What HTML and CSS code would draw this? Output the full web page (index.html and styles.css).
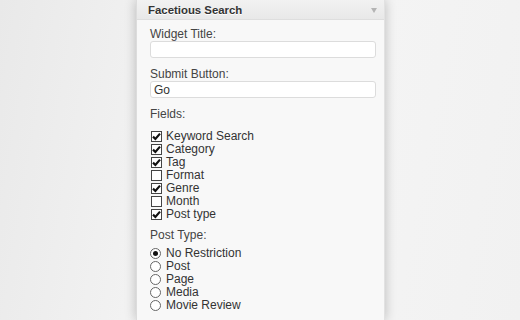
FILE: index.html
```html
<!DOCTYPE html>
<html lang="en">
<head>
    <meta charset="UTF-8">
    <title>Facetious Search widget</title>
    <link rel="stylesheet" href="styles.css">
</head>
<body>
    <div class="stage">
        <div class="widget">
            <div class="widget-top">
                <h3>Facetious Search</h3>
                <span class="arrow"></span>
            </div>

            <div class="widget-inside">
                <p class="field">
                    <label>Widget Title:</label>
                    <input type="text" class="text-input" value="">
                </p>
                <p class="field">
                    <label>Submit Button:</label>
                    <input type="text" class="text-input" value="Go">
                </p>

                <!-- fields -->
                <p class="group-title">Fields:</p>
                <ul class="choices">
                    <li><span class="box checked"><svg viewBox="0 0 9 9"><path d="M1 4.6 L3.4 7 L8 1.6" /></svg></span>Keyword Search</li>
                    <li><span class="box checked"><svg viewBox="0 0 9 9"><path d="M1 4.6 L3.4 7 L8 1.6" /></svg></span>Category</li>
                    <li><span class="box checked"><svg viewBox="0 0 9 9"><path d="M1 4.6 L3.4 7 L8 1.6" /></svg></span>Tag</li>
                    <li><span class="box"></span>Format</li>
                    <li><span class="box checked"><svg viewBox="0 0 9 9"><path d="M1 4.6 L3.4 7 L8 1.6" /></svg></span>Genre</li>
                    <li><span class="box"></span>Month</li>
                    <li><span class="box checked"><svg viewBox="0 0 9 9"><path d="M1 4.6 L3.4 7 L8 1.6" /></svg></span>Post type</li>
                </ul>

                <!-- post type -->
                <p class="group-title">Post Type:</p>
                <ul class="choices radios">
                    <li><span class="dot on"></span>No Restriction</li>
                    <li><span class="dot"></span>Post</li>
                    <li><span class="dot"></span>Page</li>
                    <li><span class="dot"></span>Media</li>
                    <li><span class="dot"></span>Movie Review</li>
                </ul>
            </div>
        </div>
    </div>
</body>
</html>
```

FILE: styles.css
```css
html, body {
    margin: 0;
    padding: 0;
    height: 100%;
}
body {
    font-family: 'Liberation Sans', Arial, sans-serif;
    font-size: 12px;
    color: #333;
    background: linear-gradient(100deg, #e9e9e9 0%, #f6f6f6 45%, #f1f1f1 100%);
    overflow: hidden;
}
.stage {
    padding-left: 136px;
    height: 100%;
}
.widget {
    width: 247px;
    min-height: 100%;
    background: #f8f8f8;
    border-left: 1px solid #dcdcdc;
    border-right: 1px solid #e2e2e2;
    box-shadow: 0 0 11px rgba(0, 0, 0, 0.24);
}
.widget-top {
    height: 19px;
    display: flex;
    align-items: center;
    justify-content: space-between;
    padding: 0 7px 0 11px;
    background: linear-gradient(#f2f2f2, #e8e8e8);
    border-bottom: 1px solid #dedede;
}
.widget-top h3 {
    margin: 0;
    font-size: 11.4px;
    font-weight: bold;
    color: #333;
    text-shadow: 0 1px 0 #fff;
}
.arrow {
    width: 0;
    height: 0;
    border-left: 3.5px solid transparent;
    border-right: 3.5px solid transparent;
    border-top: 5px solid #b4b4b4;
    margin-top: 1px;
}
.widget-inside {
    padding: 8px 9px 0 13px;
}
.field {
    margin: 0 0 10px;
}
.field label {
    display: block;
    line-height: 13px;
    color: #444;
}
.text-input {
    display: block;
    box-sizing: border-box;
    width: 226px;
    height: 17px;
    margin: 0;
    padding: 0 3px;
    font-family: inherit;
    font-size: 12px;
    color: #333;
    background: #fff;
    border: 1px solid #dcdcdc;
    border-radius: 3px;
}
.group-title {
    margin: 0 0 10px;
    line-height: 13px;
    color: #444;
}
.choices {
    list-style: none;
    margin: -1px 0 8px;
    padding: 0;
}
.choices li {
    display: flex;
    align-items: center;
    height: 13px;
    line-height: 13px;
}
.box {
    width: 11px;
    height: 11px;
    box-sizing: border-box;
    margin: 0 4px 0 1px;
    border: 1px solid #444;
    background: #fff;
    display: flex;
    align-items: center;
    justify-content: center;
}
.box svg {
    width: 9px;
    height: 9px;
}
.box path {
    fill: none;
    stroke: #111;
    stroke-width: 2.2;
}
.radios {
    margin-top: -5px;
}
.dot {
    width: 11px;
    height: 11px;
    box-sizing: border-box;
    margin: 0 5px 0 0;
    border: 1px solid #666;
    border-radius: 50%;
    background: #fff;
    display: flex;
    align-items: center;
    justify-content: center;
}
.dot.on::after {
    content: "";
    width: 5px;
    height: 5px;
    border-radius: 50%;
    background: #111;
}
```
